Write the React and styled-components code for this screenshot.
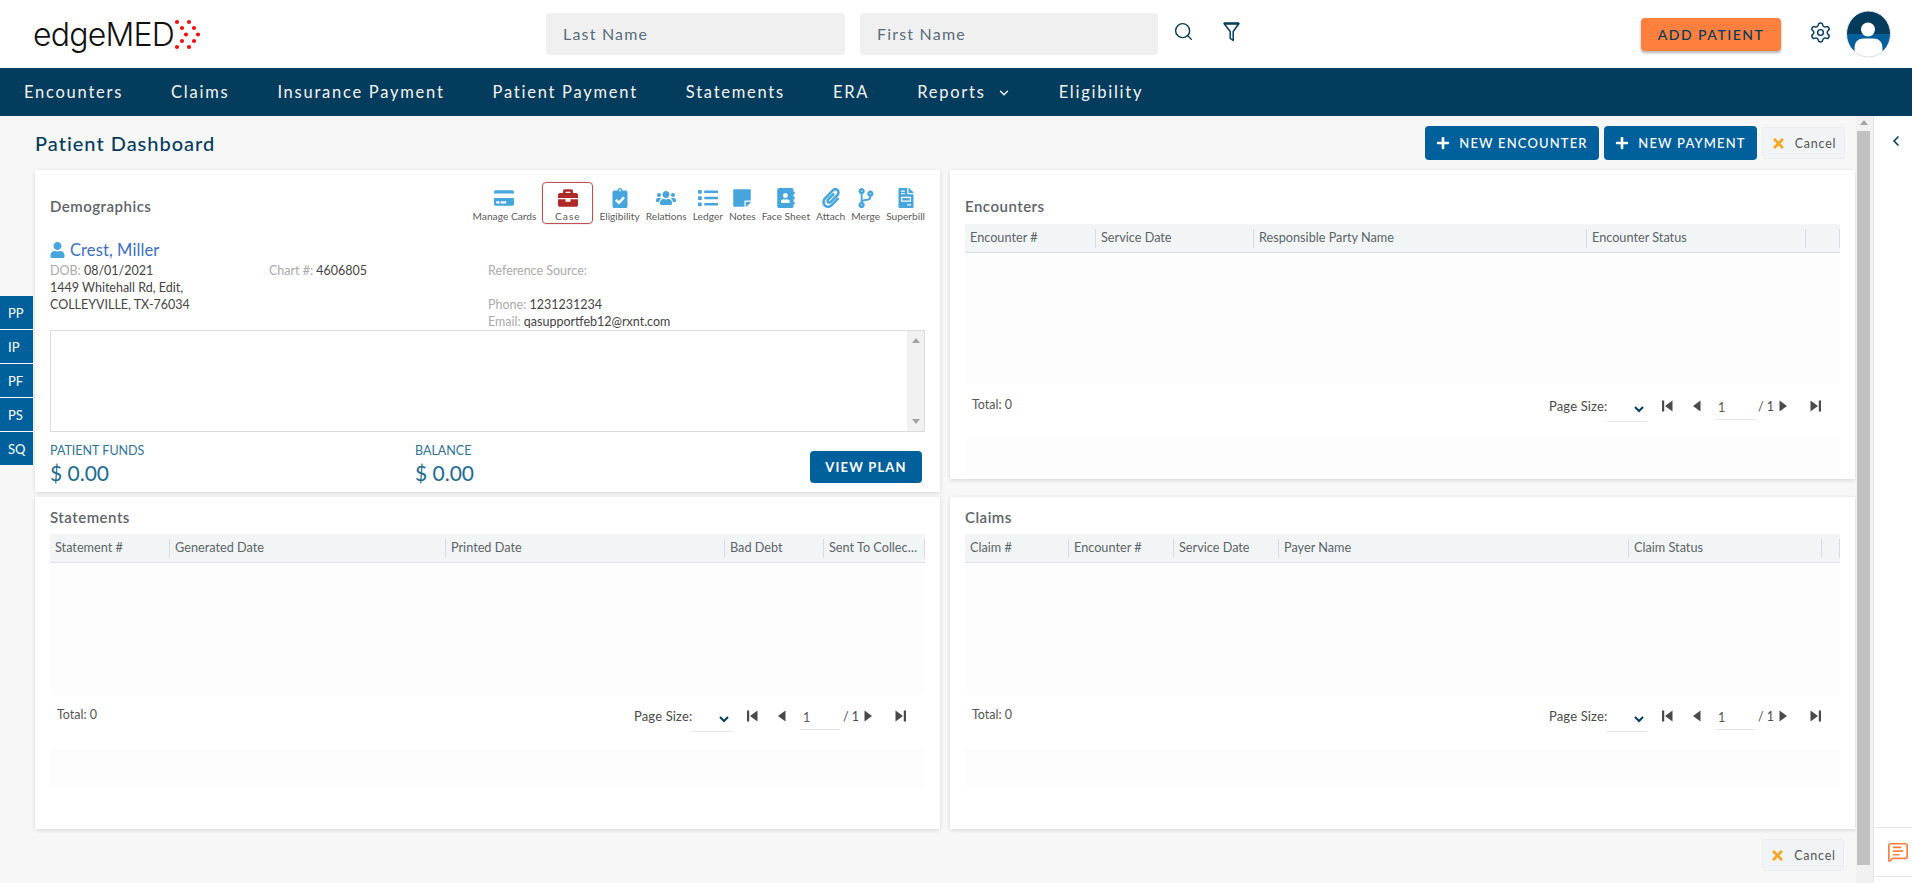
import React from "react";
import styled, { createGlobalStyle } from "styled-components";
import {
  FaAddressBook,
  FaBriefcase,
  FaClipboardCheck,
  FaCodeBranch,
  FaCreditCard,
  FaFileInvoice,
  FaList,
  FaPaperclip,
  FaPlus,
  FaStickyNote,
  FaTimes,
  FaUser,
  FaUsers,
} from "react-icons/fa";
import { ChevronDown, ChevronLeft, MessageSquareText, Search, Settings } from "lucide-react";

const navy = "#033c5c";
const blue = "#00609c";
const sky = "#45a5dc";
const bodyFont = `Lato, "Noto Sans", sans-serif`;

const GlobalStyle = createGlobalStyle`
  * { box-sizing: border-box; }
  html, body { margin: 0; height: 100%; overflow: hidden; }
  body { font-family: ${bodyFont}; background: #f7f7f7; color: #444; }
`;

const Page = styled.div`
  width: 1912px;
  height: 883px;
  display: flex;
  flex-direction: column;
  position: relative;
  overflow: hidden;
`;

const Header = styled.header`
  height: 68px;
  background: white;
  display: flex;
  align-items: center;
  padding: 0 21px 0 33px;
`;

const Logo = styled.div`
  width: 513px;
  display: flex;
  align-items: center;
`;

const LogoText = styled.span`
  font-family: Inter, "Liberation Sans", sans-serif;
  font-size: 32px;
  font-weight: 300;
  letter-spacing: -0.8px;
  color: #111;
`;

const SearchInput = styled.input`
  width: ${(props) => props.$width}px;
  height: 42px;
  margin-right: 15px;
  border: none;
  border-radius: 4px;
  background: #f0f0f0;
  padding: 0 17px 2px;
  font-family: ${bodyFont};
  font-size: 16px;
  letter-spacing: 1.2px;
  &::placeholder { color: #5a6b7c; opacity: 1; }
`;

const HeaderIcon = styled.span`
  display: flex;
  color: ${navy};
  margin-left: ${(props) => props.$left}px;
  margin-bottom: ${(props) => props.$lift || 0}px;
`;

const AddButton = styled.button`
  width: 140px;
  height: 33px;
  margin-left: auto;
  border: none;
  border-radius: 4px;
  background: #ff7f3f;
  color: ${navy};
  font-family: ${bodyFont};
  font-size: 14px;
  font-weight: 500;
  letter-spacing: 1.5px;
  box-shadow: 0 2px 3px rgb(0 0 0 / 0.3);
`;

const Nav = styled.nav`
  height: 48px;
  background: ${navy};
  display: flex;
  align-items: center;
  padding: 0 0 1px 24px;
  gap: 48px;
`;

const NavItem = styled.span`
  display: flex;
  align-items: center;
  gap: 11px;
  color: #f4f4f4;
  font-size: 16.5px;
  letter-spacing: 1.75px;
  svg { margin-top: 2px; }
`;

const Body = styled.div`
  flex: 1;
  display: flex;
  min-height: 0;
`;

const Content = styled.main`
  flex: 1;
  min-width: 0;
  padding-left: 35px;
`;

const TitleRow = styled.div`
  height: 34px;
  margin: 10px 11px 10px 0;
  display: flex;
  align-items: center;
  gap: 5px;
`;

const PageTitle = styled.h1`
  margin: 0 auto 0 0;
  font-size: 20px;
  font-weight: 500;
  letter-spacing: 1px;
  color: ${navy};
`;

const PrimaryButton = styled.button`
  height: 34px;
  width: ${(props) => props.$width}px;
  border: none;
  border-radius: 4px;
  background: ${blue};
  color: white;
  font-family: ${bodyFont};
  font-size: 13px;
  font-weight: ${(props) => props.$weight || 500};
  letter-spacing: 1.15px;
  white-space: nowrap;
  padding: 0;
  display: inline-flex;
  align-items: center;
  justify-content: center;
  gap: 9px;
`;

const CancelButton = styled.button`
  width: ${(props) => props.$width}px;
  height: 32px;
  border: 1px solid #ececec;
  border-radius: 3px;
  background: #f1f4f6;
  color: #555;
  font-family: ${bodyFont};
  font-size: 12.5px;
  letter-spacing: 0.8px;
  padding: 0;
  display: inline-flex;
  align-items: center;
  justify-content: center;
  gap: 9px;
  svg { color: #f5a623; }
`;

const Cards = styled.div`
  display: grid;
  grid-template-columns: 905px 905px;
  grid-template-rows: 322px 332px;
  column-gap: 10px;
  row-gap: 5px;
`;

const Card = styled.section`
  background: white;
  box-shadow: 0 1px 4px rgb(0 0 0 / 0.14);
  padding: 0 15px;
  height: ${(props) => props.$height || "auto"};
  overflow: hidden;
`;

const CardHead = styled.div`
  height: ${(props) => props.$height}px;
  padding-bottom: ${(props) => props.$bottom}px;
  display: flex;
  align-items: flex-end;
`;

const CardTitle = styled.h2`
  margin: 0;
  font-size: 15px;
  line-height: 18px;
  font-weight: 600;
  letter-spacing: 0.5px;
  color: #5d6468;
`;

const DemoHead = styled.div`
  height: 59px;
  padding-top: 12px;
  display: flex;
  align-items: flex-start;
  justify-content: space-between;
`;

const DemoTitle = styled(CardTitle)`
  margin-top: 15px;
`;

const Tools = styled.div`
  display: flex;
  align-items: flex-start;
  gap: 6px;
`;

const Tool = styled.div`
  display: flex;
  flex-direction: column;
  align-items: center;
  justify-content: flex-end;
  height: 42px;
  padding: ${(props) => (props.$active ? "0 11px 1px" : "0 0 2px")};
  min-width: ${(props) => (props.$active ? "51px" : "0")};
  border: ${(props) => (props.$active ? "1px solid #c0504f" : "none")};
  border-radius: 4px;
  box-shadow: ${(props) => (props.$active ? "0 0 2px rgb(0 0 0 / 0.2)" : "none")};
  font-size: 10.2px;
  color: #5c5c5c;
  letter-spacing: ${(props) => (props.$active ? "1px" : "0")};
  white-space: nowrap;
  svg {
    width: auto;
    height: 20px;
    margin-bottom: 2px;
    color: ${(props) => (props.$active ? "#b02a2a" : sky)};
  }
`;

const PatientName = styled.div`
  display: flex;
  align-items: center;
  gap: 5px;
  height: 22px;
  margin-top: 10px;
  font-size: 16.5px;
  letter-spacing: 0.1px;
  color: #3d6fc0;
  svg { color: ${sky}; width: 15px; height: 16px; }
`;

const InfoGrid = styled.div`
  display: grid;
  grid-template-columns: 219px 219px 1fr;
  height: 69px;
  padding-top: 1px;
  font-size: 12.5px;
  line-height: 17px;
  color: #444;
`;

const Line = styled.div`
  height: 17px;
  white-space: nowrap;
`;

const Muted = styled.span`
  color: #aaa;
`;

const NoteBox = styled.div`
  height: 102px;
  border: 1px solid #ddd;
  display: flex;
`;

const NoteArea = styled.textarea`
  flex: 1;
  border: none;
  resize: none;
  outline: none;
`;

const NoteScroll = styled.div`
  width: 17px;
  background: #f1f1f1;
  display: flex;
  flex-direction: column;
  justify-content: space-between;
  align-items: center;
  padding: 7px 0;
`;

const Triangle = styled.span`
  width: 0;
  height: 0;
  border-left: 4px solid transparent;
  border-right: 4px solid transparent;
  border-${(props) => (props.$down ? "top" : "bottom")}: 5px solid #a3a3a3;
`;

const FundsRow = styled.div`
  display: grid;
  grid-template-columns: 365px 1fr auto;
  padding: 11px 3px 0 0;
`;

const FundLabel = styled.div`
  font-size: 12.5px;
  line-height: 16px;
  color: #2f7396;
`;

const FundValue = styled.div`
  font-size: 21px;
  line-height: 28px;
  color: #1d6a92;
`;

const PlanButton = styled(PrimaryButton)`
  margin-top: 8px;
  height: 32px;
`;

const HeadRow = styled.div`
  display: grid;
  grid-template-columns: ${(props) => props.$cols};
  height: 29px;
  background: #f1f5f6;
  border-bottom: 1px solid #dde1e3;
  align-items: center;
`;

const HeadCell = styled.div`
  height: 19px;
  padding-left: 5px;
  border-right: 1px solid #d9dcde;
  font-size: 12.7px;
  line-height: 17px;
  color: #5d6468;
  white-space: nowrap;
  overflow: hidden;
  text-overflow: ellipsis;
`;

const TableBody = styled.div`
  height: 131px;
  background: #fdfdfd;
`;

const PagerRow = styled.div`
  height: 55px;
  padding: 12px 18px 0 7px;
  display: flex;
  justify-content: space-between;
  font-size: 12.5px;
  color: #555;
`;

const Total = styled.span`
  line-height: 17px;
`;

const Pager = styled.div`
  display: flex;
  align-items: flex-start;
  height: 26px;
  color: #4a4a4a;
`;

const PagerLabel = styled.span`
  width: 58px;
  font-size: 13px;
  line-height: 20px;
  letter-spacing: 0.15px;
  white-space: nowrap;
`;

const SizeSelect = styled.select`
  width: 40px;
  height: 26px;
  margin-right: 14px;
  border: none;
  border-bottom: 1px solid #e6e6e6;
  background: transparent;
  color: ${navy};
`;

const PageInput = styled.input`
  width: 40px;
  height: 24px;
  margin: 0 3px 0 13px;
  border: none;
  border-bottom: 1px solid #e6e6e6;
  background: transparent;
  padding: 0 3px;
  font-family: ${bodyFont};
  font-size: 12.5px;
  color: #555;
`;

const PageOf = styled.span`
  width: 20px;
  line-height: 22px;
`;

const PagerArrow = styled.svg`
  width: 12px;
  height: 12px;
  margin: 4px ${(props) => props.$right || 0}px 0 0;
  fill: #4a4a4a;
`;

const BottomBand = styled.div`
  height: 37px;
  background: #fdfdfd;
`;

const FooterRow = styled.div`
  display: flex;
  justify-content: flex-end;
  padding: 10px 12px 0 0;
`;

const ScrollTrack = styled.div`
  width: 17px;
  background: #f1f1f1;
  padding: 4px 3px 0 1px;
  display: flex;
  flex-direction: column;
  align-items: center;
  gap: 6px;
`;

const ScrollThumb = styled.div`
  width: 13px;
  height: 734px;
  background: #c1c1c1;
`;

const SidePanel = styled.aside`
  width: 39px;
  background: white;
  border-left: 1px solid #e6e6e6;
  display: flex;
  flex-direction: column;
  color: ${navy};
`;

const SideToggle = styled.div`
  height: 711px;
  padding: 17px 0 0 14px;
`;

const SideChat = styled.div`
  height: 50px;
  padding-left: 9px;
  border-top: 1px solid #e6e6e6;
  border-bottom: 1px solid #e6e6e6;
  display: flex;
  align-items: center;
  justify-content: center;
  color: #ff7f3f;
`;

const Rail = styled.div`
  position: absolute;
  left: 0;
  top: 296px;
  width: 33px;
  display: flex;
  flex-direction: column;
  gap: 1px;
`;

const RailItem = styled.div`
  height: 33px;
  background: ${blue};
  color: white;
  font-size: 13px;
  display: flex;
  align-items: center;
  padding-left: 8px;
`;

const tools = [
  ["Manage Cards", FaCreditCard],
  ["Case", FaBriefcase],
  ["Eligibility", FaClipboardCheck],
  ["Relations", FaUsers],
  ["Ledger", FaList],
  ["Notes", FaStickyNote],
  ["Face Sheet", FaAddressBook],
  ["Attach", FaPaperclip],
  ["Merge", FaCodeBranch],
  ["Superbill", FaFileInvoice],
];

const navItems = ["Encounters", "Claims", "Insurance Payment", "Patient Payment", "Statements", "ERA", "Reports", "Eligibility"];

function Avatar() {
  return (
    <svg width="45" height="48" viewBox="0 0 45 48">
      <defs>
        <clipPath id="avatarClip">
          <ellipse cx="22.5" cy="24" rx="22" ry="23" />
        </clipPath>
      </defs>
      <g clipPath="url(#avatarClip)">
        <rect width="45" height="24" fill={navy} />
        <rect y="24" width="45" height="24" fill={blue} />
        <circle cx="22" cy="19.5" r="7" fill="white" />
        <path d="M8.5 48V38Q8.5 28.5 18 28.5H27Q36.5 28.5 36.5 38V48Z" fill="white" />
      </g>
      <ellipse cx="22.5" cy="24" rx="22" ry="23" fill="none" stroke="#e6e6e6" />
    </svg>
  );
}

function FunnelIcon() {
  return (
    <svg width="17" height="20" viewBox="0 0 17 20" fill="none" stroke={navy} strokeWidth="1.5" strokeLinejoin="round">
      <path d="M1 1.5H16L10.2 9.5V18.5L7.2 16.5V9.5Z" />
      <path d="M1 1.5H16" strokeWidth="2.4" />
    </svg>
  );
}

function LogoDots() {
  const dots = [[3, 3], [15, 3], [8, 9], [20, 9], [12, 15.5], [24, 15.5], [8, 22], [20, 22], [3, 28], [15, 28]];
  return (
    <svg width="27" height="31" viewBox="0 0 27 31">
      {dots.map(([x, y]) => (
        <circle key={`${x}-${y}`} cx={x} cy={y} r="2.1" fill="#ee1111" />
      ))}
    </svg>
  );
}

function TablePager() {
  return (
    <PagerRow>
      <Total>Total: 0</Total>
      <Pager>
        <PagerLabel>Page Size:</PagerLabel>
        <SizeSelect aria-label="Page size" />
        <PagerArrow viewBox="0 0 12 12" $right={17}><path d="M1 0.5h2.2v11H1zM11.5 0.5v11L4 6z" /></PagerArrow>
        <PagerArrow viewBox="0 0 12 12"><path d="M10.5 0.5v11L3 6z" /></PagerArrow>
        <PageInput defaultValue="1" aria-label="Page" />
        <PageOf>/ 1</PageOf>
        <PagerArrow viewBox="0 0 12 12" $right={20}><path d="M1.5 0.5v11L9 6z" /></PagerArrow>
        <PagerArrow viewBox="0 0 12 12"><path d="M0.5 0.5v11L8 6zM8.8 0.5h2.2v11H8.8z" /></PagerArrow>
      </Pager>
    </PagerRow>
  );
}

function TableCard({ title, cols, columns, headHeight, headBottom, height }) {
  return (
    <Card $height={height}>
      <CardHead $height={headHeight} $bottom={headBottom}>
        <CardTitle>{title}</CardTitle>
      </CardHead>
      <HeadRow $cols={cols}>
        {columns.map((column) => (
          <HeadCell key={column}>{column}</HeadCell>
        ))}
      </HeadRow>
      <TableBody />
      <TablePager />
      <BottomBand />
    </Card>
  );
}

export default function App() {
  return (
    <Page>
      <GlobalStyle />
      <Header>
        <Logo>
          <LogoText>edgeMED</LogoText>
          <LogoDots />
        </Logo>
        <SearchInput $width={299} placeholder="Last Name" />
        <SearchInput $width={298} placeholder="First Name" />
        <HeaderIcon $left={0} $lift={6}><Search size={21} strokeWidth={1.6} /></HeaderIcon>
        <HeaderIcon $left={29} $lift={4}><FunnelIcon /></HeaderIcon>
        <AddButton>ADD PATIENT</AddButton>
        <HeaderIcon $left={28} $lift={3}><Settings size={23} strokeWidth={1.5} /></HeaderIcon>
        <HeaderIcon $left={14}><Avatar /></HeaderIcon>
      </Header>
      <Nav>
        {navItems.map((item) => (
          <NavItem key={item}>
            {item}
            {item === "Reports" && <ChevronDown size={14} strokeWidth={2.5} />}
          </NavItem>
        ))}
      </Nav>
      <Body>
        <Content>
          <TitleRow>
            <PageTitle>Patient Dashboard</PageTitle>
            <PrimaryButton $width={174}><FaPlus size={14} />NEW ENCOUNTER</PrimaryButton>
            <PrimaryButton $width={153}><FaPlus size={14} />NEW PAYMENT</PrimaryButton>
            <CancelButton $width={83}><FaTimes size={15} />Cancel</CancelButton>
          </TitleRow>
          <Cards>
            <Card>
              <DemoHead>
                <DemoTitle>Demographics</DemoTitle>
                <Tools>
                  {tools.map(([label, Icon]) => (
                    <Tool key={label} $active={label === "Case"}>
                      <Icon />
                      {label}
                    </Tool>
                  ))}
                </Tools>
              </DemoHead>
              <PatientName><FaUser />Crest, Miller</PatientName>
              <InfoGrid>
                <div>
                  <Line><Muted>DOB:</Muted> 08/01/2021</Line>
                  <Line>1449 Whitehall Rd, Edit,</Line>
                  <Line>COLLEYVILLE, TX-76034</Line>
                </div>
                <div>
                  <Line><Muted>Chart #:</Muted> 4606805</Line>
                </div>
                <div>
                  <Line><Muted>Reference Source:</Muted></Line>
                  <Line />
                  <Line><Muted>Phone:</Muted> 1231231234</Line>
                  <Line><Muted>Email:</Muted> qasupportfeb12@rxnt.com</Line>
                </div>
              </InfoGrid>
              <NoteBox>
                <NoteArea aria-label="Notes" />
                <NoteScroll>
                  <Triangle />
                  <Triangle $down />
                </NoteScroll>
              </NoteBox>
              <FundsRow>
                <div>
                  <FundLabel>PATIENT FUNDS</FundLabel>
                  <FundValue>$ 0.00</FundValue>
                </div>
                <div>
                  <FundLabel>BALANCE</FundLabel>
                  <FundValue>$ 0.00</FundValue>
                </div>
                <PlanButton $width={112} $weight={700}>VIEW PLAN</PlanButton>
              </FundsRow>
            </Card>
            <TableCard
              title="Encounters"
              height="309px"
              headHeight={54}
              headBottom={9}
              cols="131px 158px 333px 219px 34px"
              columns={["Encounter #", "Service Date", "Responsible Party Name", "Encounter Status", ""]}
            />
            <TableCard
              title="Statements"
              headHeight={37}
              headBottom={8}
              cols="120px 276px 279px 99px 101px"
              columns={["Statement #", "Generated Date", "Printed Date", "Bad Debt", "Sent To Collections"]}
            />
            <TableCard
              title="Claims"
              headHeight={37}
              headBottom={8}
              cols="104px 105px 105px 350px 193px 18px"
              columns={["Claim #", "Encounter #", "Service Date", "Payer Name", "Claim Status", ""]}
            />
          </Cards>
          <FooterRow>
            <CancelButton $width={82}><FaTimes size={15} />Cancel</CancelButton>
          </FooterRow>
        </Content>
        <ScrollTrack>
          <Triangle />
          <ScrollThumb />
        </ScrollTrack>
        <SidePanel>
          <SideToggle><ChevronLeft size={16} strokeWidth={2.5} /></SideToggle>
          <SideChat><MessageSquareText size={22} strokeWidth={1.8} /></SideChat>
        </SidePanel>
      </Body>
      <Rail>
        {["PP", "IP", "PF", "PS", "SQ"].map((item) => (
          <RailItem key={item}>{item}</RailItem>
        ))}
      </Rail>
    </Page>
  );
}
